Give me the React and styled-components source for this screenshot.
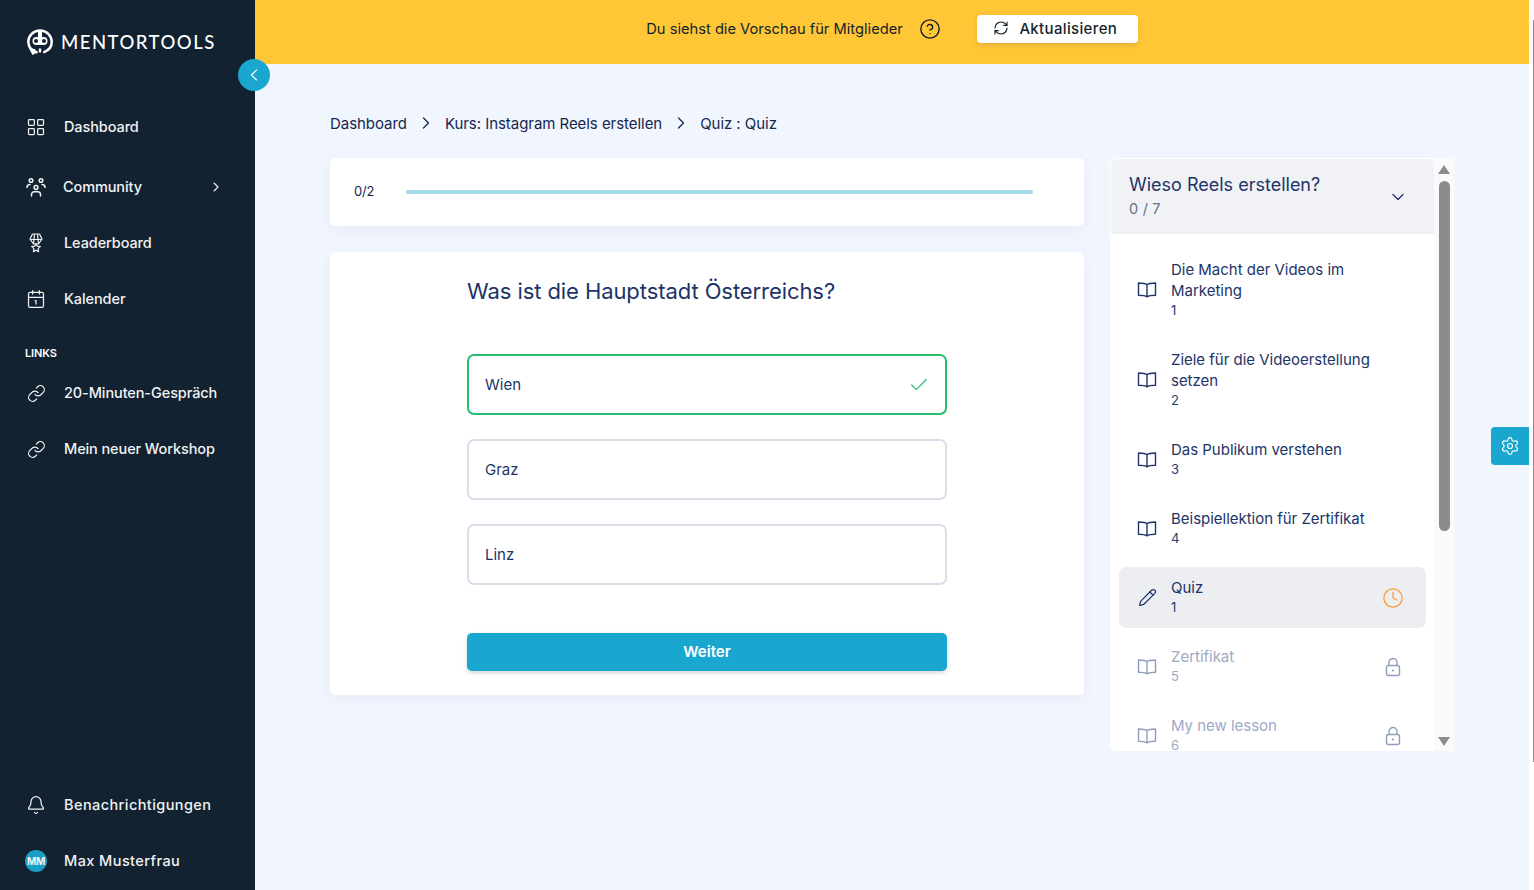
import React from "react";
import styled, { createGlobalStyle } from "styled-components";
import {
  Calendar1,
  Check,
  ChevronDown,
  ChevronLeft,
  ChevronRight,
  CircleHelp,
  Clock,
  Pencil,
  Link,
  Bell,
  RefreshCw,
  Settings,
  LayoutGrid,
} from "lucide-react";

const GlobalStyle = createGlobalStyle`
  html, body {
    margin: 0;
    padding: 0;
    height: 100%;
    overflow: hidden;
    background: #fff;
  }
  * {
    box-sizing: border-box;
  }
  body {
    font-family: "Inter", "Liberation Sans", sans-serif;
    color: #1c3468;
  }
`;

const Page = styled.div`
  display: flex;
  width: 1534px;
  height: 890px;
  overflow: hidden;
`;

const Sidebar = styled.aside`
  position: relative;
  z-index: 2;
  flex: 0 0 255px;
  display: flex;
  flex-direction: column;
  background: #122231;
  padding-bottom: 1px;
`;

const LogoRow = styled.div`
  display: flex;
  align-items: center;
  height: 99px;
  padding: 0 0 15px 26px;
  gap: 7px;
`;

const LogoText = styled.span`
  font-family: "Lato", sans-serif;
  font-size: 18.5px;
  font-weight: 500;
  letter-spacing: 1.5px;
  color: #fff;
  white-space: nowrap;
`;

const Collapse = styled.button`
  position: absolute;
  top: 59px;
  left: 238px;
  width: 32px;
  height: 32px;
  border: 0;
  padding: 0;
  border-radius: 50%;
  background: #1aa7cf;
  color: #fff;
  display: flex;
  align-items: center;
  justify-content: center;
`;

const NavItem = styled.div`
  display: flex;
  align-items: center;
  height: 56px;
  padding: 0 31px 0 26px;
  gap: ${(p) => (p.$tight ? "17px" : "18px")};
  color: #fff;
  font-size: 14.5px;
  font-weight: 500;
  letter-spacing: ${(p) => (p.$wide ? "0.42px" : "-0.1px")};
  margin-top: ${(p) => p.$offset || 0}px;
  opacity: 0.94;
  white-space: nowrap;
`;

const NavIcon = styled.span`
  display: flex;
  flex: 0 0 20px;
  justify-content: center;
`;

const NavLabel = styled.span`
  flex: 1;
  padding-bottom: 2px;
`;

const SectionLabel = styled.div`
  height: 38px;
  padding: 20px 0 0 25px;
  color: #fff;
  font-size: 11px;
  font-weight: 600;
  line-height: 13px;
  letter-spacing: -0.1px;
`;

const SideFooter = styled.div`
  margin-top: auto;
`;

const Avatar = styled.span`
  flex: 0 0 22px;
  width: 22px;
  height: 22px;
  margin-left: -1px;
  margin-right: -1px;
  border-radius: 50%;
  background: #1aa7cf;
  color: #fff;
  font-size: 10px;
  font-weight: 700;
  line-height: 22px;
  text-align: center;
  letter-spacing: -0.2px;
`;

const Main = styled.main`
  flex: 1;
  min-width: 0;
  display: flex;
  flex-direction: column;
  background: #f1f5fe;
  position: relative;
`;

const PreviewBar = styled.div`
  display: flex;
  align-items: center;
  justify-content: center;
  height: 64px;
  background: #ffc736;
  color: #131f2c;
  font-size: 14.7px;
  padding-bottom: 6px;
`;

const PreviewText = styled.span`
  padding-bottom: 1px;
`;

const HelpIcon = styled.span`
  display: flex;
  margin: 0 36px 0 16px;
`;

const RefreshButton = styled.button`
  display: flex;
  align-items: center;
  justify-content: center;
  gap: 10px;
  width: 161px;
  height: 28px;
  border: 0;
  padding: 0 4px 2px 0;
  border-radius: 4px;
  background: #fff;
  color: #131f2c;
  font-family: inherit;
  font-size: 15px;
  font-weight: 500;
  letter-spacing: 0.35px;
  box-shadow: 0 2px 5px rgba(60, 60, 60, 0.15);
`;

const Content = styled.div`
  display: flex;
  flex-direction: column;
  padding: 50px 0 0 75px;
`;

const Breadcrumb = styled.nav`
  display: flex;
  align-items: center;
  height: 18px;
  margin-bottom: 26px;
  font-size: 15px;
  letter-spacing: -0.05px;
  color: #14284f;
`;

const Crumb = styled.span`
  white-space: nowrap;
`;

const CrumbArrow = styled.span`
  display: flex;
  width: 38px;
  justify-content: center;
`;

const Columns = styled.div`
  display: flex;
  align-items: flex-start;
  gap: 26px;
`;

const LeftColumn = styled.div`
  flex: 0 0 754px;
  display: flex;
  flex-direction: column;
  gap: 26px;
`;

const Card = styled.section`
  background: #fff;
  border-radius: 5px;
  box-shadow: 0 4px 14px rgba(60, 80, 130, 0.06);
`;

const ProgressCard = styled(Card)`
  display: flex;
  align-items: center;
  height: 68px;
  padding: 0 51px 0 24px;
`;

const ProgressLabel = styled.span`
  flex: 0 0 52px;
  font-size: 13px;
  padding-bottom: 2px;
  color: #14284f;
  letter-spacing: -0.2px;
`;

const ProgressTrack = styled.div`
  flex: 1;
  height: 4px;
  border-radius: 2px;
  background: #a3dbea;
`;

const QuizCard = styled(Card)`
  height: 443px;
  padding: 24px 137px 0;
`;

const Question = styled.h2`
  margin: 0 0 46px;
  height: 32px;
  font-size: 22px;
  line-height: 31px;
  font-weight: 400;
  color: #1c3468;
  letter-spacing: -0.08px;
`;

const Answers = styled.div`
  display: flex;
  flex-direction: column;
  gap: 24px;
  margin-bottom: 48px;
`;

const Answer = styled.div`
  display: flex;
  align-items: center;
  justify-content: space-between;
  height: 61px;
  padding: 0 15px 0 16px;
  border: 2px solid ${(p) => (p.$correct ? "#27bf6f" : "#dadeea")};
  border-radius: 7px;
  font-size: 15px;
  color: #1c3468;
`;

const AnswerText = styled.span`
  padding-bottom: 1px;
`;

const NextButton = styled.button`
  display: block;
  width: 100%;
  height: 38px;
  border: 0;
  padding: 0 0 2px;
  border-radius: 5px;
  background: #1aa7cf;
  color: #fff;
  font-family: inherit;
  font-size: 15px;
  font-weight: 600;
  box-shadow: 0 2px 4px rgba(40, 60, 90, 0.2);
`;

const LessonPanel = styled.aside`
  flex: 0 0 344px;
  display: flex;
  height: 593px;
  background: #fff;
  border-radius: 5px 0 0 5px;
  overflow: hidden;
`;

const LessonBody = styled.div`
  flex: 1;
  min-width: 0;
  overflow: hidden;
  padding: 1px 0 0 1px;
`;

const ChapterHeader = styled.div`
  display: flex;
  align-items: center;
  justify-content: space-between;
  height: 75px;
  padding: 0 26px 0 18px;
  background: #f1f2f6;
  border-radius: 5px 5px 0 0;
`;

const ChapterTitle = styled.div`
  font-size: 18px;
  line-height: 24px;
  color: #1c3468;
`;

const ChapterCount = styled.div`
  font-size: 14.5px;
  line-height: 22px;
  margin-top: 1px;
  color: #64728a;
  letter-spacing: 0.2px;
`;

const LessonList = styled.div`
  display: flex;
  flex-direction: column;
  gap: 8px;
  padding: 15px 8px 0 8px;
`;

const Lesson = styled.div`
  flex: none;
  display: flex;
  align-items: center;
  gap: 14px;
  padding: 10px 22px 11px 18px;
  border-radius: 7px;
  background: ${(p) => (p.$active ? "#edeef2" : "transparent")};
  color: ${(p) => (p.$locked ? "#9daac6" : "#1c3468")};
`;

const LessonIcon = styled.span`
  display: flex;
  flex: 0 0 20px;
  justify-content: center;
  padding-top: 1px;
  color: ${(p) => (p.$locked ? "#8f9dbd" : "#1c3468")};
`;

const LessonText = styled.div`
  flex: 1;
  min-width: 0;
`;

const LessonTitle = styled.div`
  max-width: 215px;
  font-size: 15px;
  line-height: 21px;
  letter-spacing: -0.02px;
`;

const LessonNumber = styled.div`
  font-size: 13px;
  line-height: 19px;
  color: ${(p) => (p.$locked ? "#9daac6" : "#24406f")};
`;

const LessonStatus = styled.span`
  display: flex;
  flex: 0 0 22px;
  justify-content: center;
  padding-top: 1px;
`;

const ScrollTrack = styled.div`
  flex: 0 0 20px;
  display: flex;
  flex-direction: column;
  align-items: center;
  background: #fafafa;
  padding-top: 7px;
`;

const Arrow = styled.span`
  width: 0;
  height: 0;
  border-left: 6.5px solid transparent;
  border-right: 6.5px solid transparent;
  border-bottom: 9px solid #8c8c8c;
  ${(p) => p.$down && "transform: rotate(180deg); margin-top: 206px;"}
`;

const ScrollThumb = styled.div`
  width: 11px;
  height: 350px;
  margin-top: 7px;
  border-radius: 6px;
  background: #8c8c8c;
`;

const SettingsTab = styled.div`
  position: absolute;
  top: 427px;
  right: 0;
  width: 38px;
  height: 38px;
  display: flex;
  align-items: center;
  justify-content: center;
  background: #1aa7cf;
  border-radius: 4px 0 0 4px;
  color: #fff;
`;

const PageScrollbar = styled.div`
  flex: 0 0 5px;
  background: #fff;
  display: flex;
  justify-content: flex-end;
  padding-top: 20px;
`;

const PageThumb = styled.div`
  width: 1px;
  height: 742px;
  background: #8c8c8c;
`;

const LogoMark = () => (
  <svg width="28" height="28" viewBox="0 0 28 28" fill="none">
    <path
      d="M10.600 24.300C5.800 23.100 2.300 18.900 2.300 13.800 2.300 7.700 7.500 2.600 14 2.600s11.700 5.100 11.700 11.200c0 4.700-3 8.700-7.400 10.200"
      stroke="#fff"
      strokeWidth="2.500"
      strokeLinecap="round"
    />
    <path d="M2.500 19.500 6.500 27l5-2.800-2.500-3z" fill="#fff" />
    <path d="M12 2h4v7h-4z" fill="#fff" />
    <rect x="6.500" y="9" width="15" height="8" rx="4" fill="#fff" />
    <circle cx="10" cy="13" r="2" fill="#122231" />
    <circle cx="18" cy="13" r="2" fill="#122231" />
    <path d="M12.800 20.500h2.400v4h-2.400z" fill="#fff" />
  </svg>
);

const PeopleIcon = () => (
  <svg width="20" height="20" viewBox="0 0 20 20" fill="none" stroke="#fff" strokeWidth="1.5" strokeLinecap="round">
    <circle cx="5" cy="3.500" r="1.800" />
    <circle cx="15" cy="3.500" r="1.800" />
    <circle cx="10" cy="10.500" r="1.900" />
    <path d="M1 10.500c0-1.800 1.200-3 3-3" />
    <path d="M19 10.500c0-1.800-1.200-3-3-3" />
    <path d="M5.500 19v-1.500c0-1.600 1.200-2.800 2.800-2.800h3.400c1.600 0 2.800 1.200 2.800 2.800V19" />
  </svg>
);

const MedalIcon = () => (
  <svg width="20" height="20" viewBox="0 0 20 20" fill="none" stroke="#fff" strokeWidth="1.2" strokeLinejoin="round">
    <path d="M6.500 1h7L16 6l-3.500 5h-5L4 6z" />
    <path d="M8.500 1 7.500 11M11.500 1l1 10M4.500 6.500h11" />
    <path d="m10 10.500 1.300 2.700 3 .4-2.200 2 .5 3-2.600-1.400-2.600 1.400.5-3-2.200-2 3-.4z" />
  </svg>
);

const BookIcon = () => (
  <svg width="20" height="20" viewBox="0 0 20 20" fill="none" stroke="currentColor" strokeWidth="1.400" strokeLinejoin="round" strokeLinecap="round">
    <path d="M10 4.700C8.400 3.400 5.800 3 1.500 3v12.300c4.300 0 6.900.4 8.500 1.500 1.600-1.100 4.200-1.500 8.500-1.500V3c-4.300 0-6.900.4-8.500 1.700v12.100" />
  </svg>
);

const LockIcon = () => (
  <svg width="18" height="20" viewBox="0 0 18 20" fill="none" stroke="#8f9dbd" strokeWidth="1.400">
    <rect x="2.500" y="8.500" width="13" height="10" rx="2" />
    <path d="M5 8.500V5.500a4 4 0 0 1 8 0v3" />
    <circle cx="9" cy="13.500" r="1.100" fill="#8f9dbd" stroke="none" />
  </svg>
);

const NAV = [
  { label: "Dashboard", icon: <LayoutGrid size={20} strokeWidth={1.5} /> },
  { label: "Community", icon: <PeopleIcon />, tight: true, more: true, offset: 4 },
  { label: "Leaderboard", icon: <MedalIcon /> },
  { label: "Kalender", icon: <Calendar1 size={20} strokeWidth={1.5} /> },
];

const LINKS = ["20-Minuten-Gespräch", "Mein neuer Workshop"];

const LESSONS = [
  { title: "Die Macht der Videos im Marketing", number: 1 },
  { title: "Ziele für die Videoerstellung setzen", number: 2 },
  { title: "Das Publikum verstehen", number: 3 },
  { title: "Beispiellektion für Zertifikat", number: 4 },
  { title: "Quiz", number: 1, active: true },
  { title: "Zertifikat", number: 5, locked: true },
  { title: "My new lesson", number: 6, locked: true },
];

const App = () => {
  return (
    <Page>
      <GlobalStyle />
      <Sidebar>
        <LogoRow>
          <LogoMark />
          <LogoText>MENTORTOOLS</LogoText>
        </LogoRow>
        <Collapse>
          <ChevronLeft size={20} strokeWidth={1.4} />
        </Collapse>
        {NAV.map((item) => (
          <NavItem key={item.label} $tight={item.tight} $offset={item.offset}>
            <NavIcon>{item.icon}</NavIcon>
            <NavLabel>{item.label}</NavLabel>
            {item.more && <ChevronRight size={16} strokeWidth={1.6} />}
          </NavItem>
        ))}
        <SectionLabel>LINKS</SectionLabel>
        {LINKS.map((label) => (
          <NavItem key={label}>
            <NavIcon>
              <Link size={19} strokeWidth={1.5} />
            </NavIcon>
            <NavLabel>{label}</NavLabel>
          </NavItem>
        ))}
        <SideFooter>
          <NavItem $wide>
            <NavIcon>
              <Bell size={20} strokeWidth={1.5} />
            </NavIcon>
            <NavLabel>Benachrichtigungen</NavLabel>
          </NavItem>
          <NavItem $wide>
            <Avatar>MM</Avatar>
            <NavLabel>Max Musterfrau</NavLabel>
          </NavItem>
        </SideFooter>
      </Sidebar>
      <Main>
        <PreviewBar>
          <PreviewText>Du siehst die Vorschau für Mitglieder</PreviewText>
          <HelpIcon>
            <CircleHelp size={22} strokeWidth={1.5} />
          </HelpIcon>
          <RefreshButton>
            <RefreshCw size={16} strokeWidth={1.7} />
            Aktualisieren
          </RefreshButton>
        </PreviewBar>
        <Content>
          <Breadcrumb>
            <Crumb>Dashboard</Crumb>
            <CrumbArrow>
              <ChevronRight size={20} strokeWidth={1.5} />
            </CrumbArrow>
            <Crumb>Kurs: Instagram Reels erstellen</Crumb>
            <CrumbArrow>
              <ChevronRight size={20} strokeWidth={1.5} />
            </CrumbArrow>
            <Crumb>Quiz : Quiz</Crumb>
          </Breadcrumb>
          <Columns>
            <LeftColumn>
              <ProgressCard>
                <ProgressLabel>0/2</ProgressLabel>
                <ProgressTrack />
              </ProgressCard>
              <QuizCard>
                <Question>Was ist die Hauptstadt Österreichs?</Question>
                <Answers>
                  <Answer $correct>
                    <AnswerText>Wien</AnswerText>
                    <Check size={22} strokeWidth={1.3} color="#27bf6f" />
                  </Answer>
                  <Answer>
                    <AnswerText>Graz</AnswerText>
                  </Answer>
                  <Answer>
                    <AnswerText>Linz</AnswerText>
                  </Answer>
                </Answers>
                <NextButton>Weiter</NextButton>
              </QuizCard>
            </LeftColumn>
            <LessonPanel>
              <LessonBody>
                <ChapterHeader>
                  <div>
                    <ChapterTitle>Wieso Reels erstellen?</ChapterTitle>
                    <ChapterCount>0 / 7</ChapterCount>
                  </div>
                  <ChevronDown size={20} strokeWidth={1.5} />
                </ChapterHeader>
                <LessonList>
                  {LESSONS.map((lesson) => (
                    <Lesson key={lesson.title} $active={lesson.active} $locked={lesson.locked}>
                      <LessonIcon $locked={lesson.locked}>
                        {lesson.active ? <Pencil size={19} strokeWidth={1.5} /> : <BookIcon />}
                      </LessonIcon>
                      <LessonText>
                        <LessonTitle>{lesson.title}</LessonTitle>
                        <LessonNumber $locked={lesson.locked}>{lesson.number}</LessonNumber>
                      </LessonText>
                      {lesson.active && (
                        <LessonStatus>
                          <Clock size={22} strokeWidth={1.4} color="#fb9d3b" />
                        </LessonStatus>
                      )}
                      {lesson.locked && (
                        <LessonStatus>
                          <LockIcon />
                        </LessonStatus>
                      )}
                    </Lesson>
                  ))}
                </LessonList>
              </LessonBody>
              <ScrollTrack>
                <Arrow />
                <ScrollThumb />
                <Arrow $down />
              </ScrollTrack>
            </LessonPanel>
          </Columns>
        </Content>
        <SettingsTab>
          <Settings size={20} strokeWidth={1.4} />
        </SettingsTab>
      </Main>
      <PageScrollbar>
        <PageThumb />
      </PageScrollbar>
    </Page>
  );
};

export default App;
